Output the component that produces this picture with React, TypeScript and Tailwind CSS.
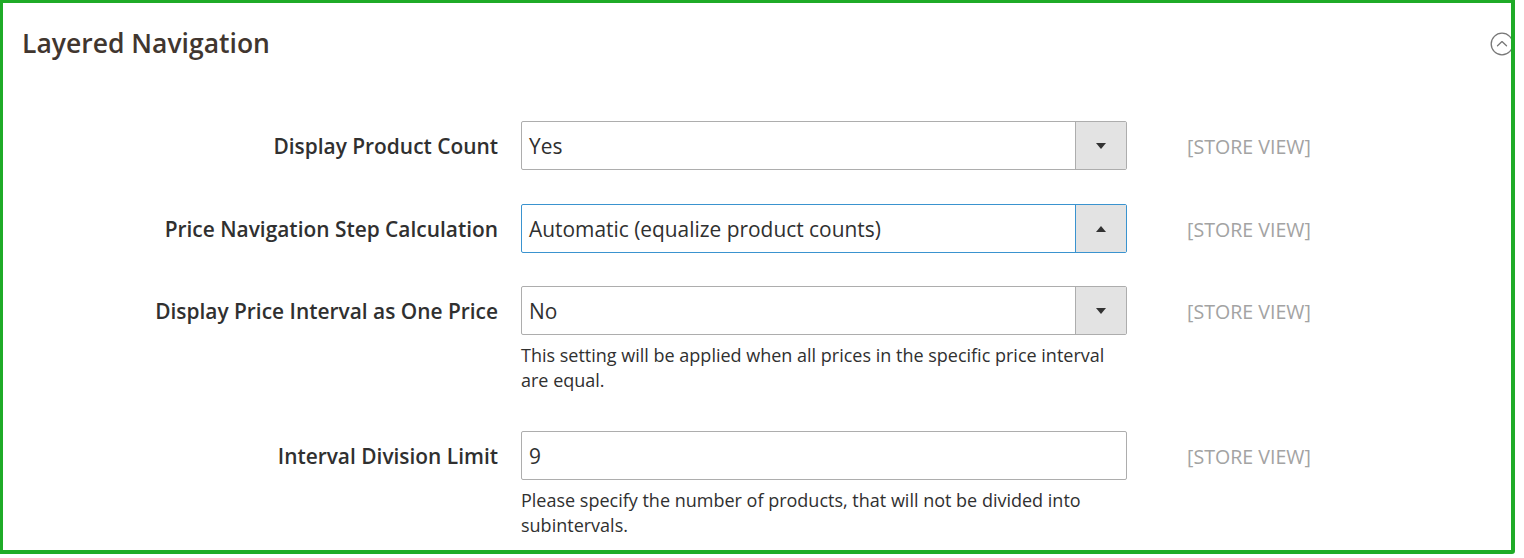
import React from "react";

type Row = {
  label: string;
  value: string;
  kind: "select" | "input";
  open?: boolean;
  note?: string[];
  gap?: string;
};

const rows: Row[] = [
  { label: "Display Product Count", value: "Yes", kind: "select", gap: "mb-[34px]" },
  {
    label: "Price Navigation Step Calculation",
    value: "Automatic (equalize product counts)",
    kind: "select",
    open: true,
    gap: "mb-[33px]",
  },
  {
    label: "Display Price Interval as One Price",
    value: "No",
    kind: "select",
    gap: "mb-[38px]",
    note: [
      "This setting will be applied when all prices in the specific price interval",
      "are equal.",
    ],
  },
  {
    label: "Interval Division Limit",
    value: "9",
    kind: "input",
    note: [
      "Please specify the number of products, that will not be divided into",
      "subintervals.",
    ],
  },
];

export default function App() {
  return (
    <div
      className="bg-white w-[1524px] h-[558px]"
      style={{ fontFamily: '"Open Sans", "Liberation Sans", sans-serif' }}
    >
      <div className="relative w-[1515px] h-[554px] border-l-[3px] border-t-[3px] border-r-[4px] border-b-[4px] border-[#1fab27] rounded-br-[3px] overflow-hidden">
        {/* Header */}
        <div className="flex items-center justify-between pt-[25px] pl-[19px]">
          <h2 className="text-[26.5px] leading-[30px] font-semibold text-[#41362f]">
            Layered Navigation
          </h2>
          <CollapseIcon />
        </div>

        {/* Fields */}
        <div className="mt-[63px]">
          {rows.map((row) => (
            <FieldRow key={row.label} row={row} />
          ))}
        </div>
      </div>
    </div>
  );
}

function FieldRow({ row }: { row: Row }) {
  return (
    <div className={`flex items-start ${row.gap ?? ""}`}>
      <label className="w-[495px] h-[49px] pt-[2px] flex items-center justify-end text-[20.9px] font-semibold text-[#303030]">
        {row.label}
      </label>
      <div className="ml-[23px] w-[606px]">
        {row.kind === "select" ? (
          <SelectBox value={row.value} open={row.open} />
        ) : (
          <div className="h-[49px] pt-[2px] border border-[#adadad] rounded-[2px] flex items-center px-[7px] text-[20.9px] text-[#303030] bg-white">
            {row.value}
          </div>
        )}
        {row.note && (
          <p className="mt-[8px] text-[18px] leading-[25px] text-[#303030]">
            {row.note.map((line) => (
              <span key={line} className="block">
                {line}
              </span>
            ))}
          </p>
        )}
      </div>
      <div className="ml-[60px] h-[49px] pt-[2px] flex items-center text-[19.6px] text-[#a3a3a3]">
        [STORE VIEW]
      </div>
    </div>
  );
}

function SelectBox({ value, open }: { value: string; open?: boolean }) {
  const border = open ? "border-[#3a93cf]" : "border-[#adadad]";
  return (
    <div className={`h-[49px] flex border ${border} rounded-[2px] bg-white`}>
      <div className="flex-1 flex items-center pt-[2px] px-[7px] text-[20.9px] text-[#303030]">
        {value}
      </div>
      <div
        className={`w-[51px] flex items-center justify-center bg-[#e3e3e3] border-l ${border}`}
      >
        {open ? (
          <span className="w-0 h-0 border-l-[5px] border-r-[5px] border-b-[6px] border-l-transparent border-r-transparent border-b-[#333]" />
        ) : (
          <span className="w-0 h-0 border-l-[5px] border-r-[5px] border-t-[6px] border-l-transparent border-r-transparent border-t-[#333]" />
        )}
      </div>
    </div>
  );
}

function CollapseIcon() {
  return (
    <svg
      width="24"
      height="24"
      viewBox="0 0 24 24"
      fill="none"
      className="mr-[-3px] mt-[2px]"
    >
      <circle cx="12" cy="12" r="10.8" stroke="#777" strokeWidth="1.3" />
      <path
        d="M7.5 13.8 L12 9.6 L16.5 13.8"
        stroke="#777"
        strokeWidth="1.3"
        strokeLinecap="round"
        strokeLinejoin="round"
      />
    </svg>
  );
}
